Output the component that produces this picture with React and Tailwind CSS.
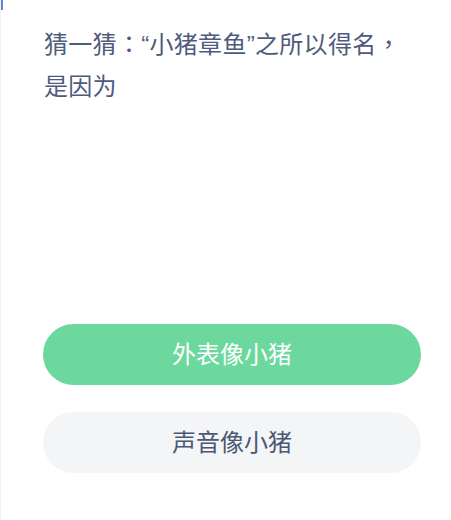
import React from "react";

export default function App(){
  const font={fontFamily:'"Liberation Sans","Noto Sans CJK SC",sans-serif'};
  const punct={fontFamily:'"Noto Sans CJK TC",sans-serif'};
  return (
    <div className="relative w-[451px] h-[520px] bg-white border-l border-[#eef0f3]" style={font}>
      <div className="absolute left-0 top-0 w-[2px] h-[10px] bg-[#6b80d8]"></div>
      <div className="flex flex-col pl-[42px] pr-[30px] pt-[22px]">
        <div className="h-[84px] text-[24px] leading-[42px] text-[#4e5b7c] pl-[1px] tracking-[0.3px]">
          猜一猜<span style={punct}>：</span>“小猪章鱼”之所以得名<span style={punct}>，</span><br/>是因为
        </div>
        <div className="mt-[218px] flex flex-col gap-[27px]">
          <button className="h-[61px] w-full rounded-full bg-[#6cd89e] text-white text-[24px]">外表像小猪</button>
          <button className="h-[61px] w-full rounded-full bg-[#f3f5f7] text-[#4b5873] text-[24px]">声音像小猪</button>
        </div>
      </div>
    </div>
  )
}
